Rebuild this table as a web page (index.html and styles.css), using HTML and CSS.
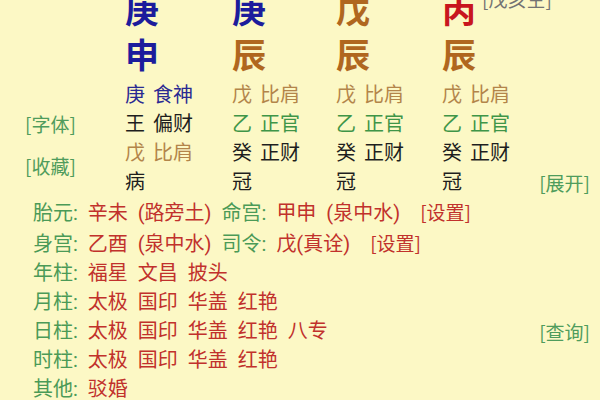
FILE: index.html
```html
<!DOCTYPE html>
<html lang="zh-CN">
<head>
<meta charset="utf-8">
<title>排盘</title>
<link rel="stylesheet" href="styles.css">
</head>
<body>
<div class="chart">
  <div></div>
  <div class="big navy">庚</div>
  <div class="big navy">庚</div>
  <div class="big brown">戊</div>
  <div class="big red">丙<span class="kong">[戊亥空]</span></div>

  <div></div>
  <div class="big navy">申</div>
  <div class="big brown">辰</div>
  <div class="big brown">辰</div>
  <div class="big brown">辰</div>

  <div class="side">
    <span class="link">[字体]</span>
    <span class="link">[收藏]</span>
  </div>
  <div class="cell snavy">庚 食神</div>
  <div class="cell tan">戊 比肩</div>
  <div class="cell tan">戊 比肩</div>
  <div class="cell tan">戊 比肩</div>

  <div class="cell black">王 偏财</div>
  <div class="cell green">乙 正官</div>
  <div class="cell green">乙 正官</div>
  <div class="cell green">乙 正官</div>

  <div class="cell tan">戊 比肩</div>
  <div class="cell black">癸 正财</div>
  <div class="cell black">癸 正财</div>
  <div class="cell black">癸 正财</div>

  <div class="cell black">病</div>
  <div class="cell black">冠</div>
  <div class="cell black">冠</div>
  <div class="cell black last"><span>冠</span><span class="link">[展开]</span></div>
</div>

<div class="info">
  <div class="row"><span class="k">胎元:</span> <span class="v">辛未 (路旁土)</span> <span class="k">命宫:</span> <span class="v">甲申 (泉中水)</span> <span class="v set">[设置]</span></div>
  <div class="row"><span class="k">身宫:</span> <span class="v">乙酉 (泉中水)</span> <span class="k">司令:</span> <span class="v">戊(真诠)</span> <span class="v set">[设置]</span></div>
  <div class="row"><span class="k">年柱:</span> <span class="v">福星 文昌 披头</span></div>
  <div class="row"><span class="k">月柱:</span> <span class="v">太极 国印 华盖 红艳</span></div>
  <div class="row split"><span><span class="k">日柱:</span> <span class="v">太极 国印 华盖 红艳 八专</span></span><span class="link">[查询]</span></div>
  <div class="row"><span class="k">时柱:</span> <span class="v">太极 国印 华盖 红艳</span></div>
  <div class="row"><span class="k">其他:</span> <span class="v">驳婚</span></div>
</div>
</body>
</html>
```
FILE: styles.css
```css
html, body {
  margin: 0;
  padding: 0;
  background: #fcf8c5;
}
body {
  width: 600px;
  height: 400px;
  overflow: hidden;
  font-family: Roboto, "Noto Sans CJK SC", sans-serif;
  color: #1e1e1e;
}
.chart {
  display: grid;
  grid-template-columns: 125px 107px 104px 106px 1fr;
  grid-template-rows: 45px 47px repeat(4, 29px);
  margin-top: -11px;
}
.big {
  font-size: 34px;
  font-weight: bold;
  line-height: 45px;
  white-space: nowrap;
}
.navy { color: #1c1c9c; }
.brown { color: #b0671f; }
.red { color: #c8161e; }
.kong {
  font-family: "Noto Sans CJK SC", sans-serif;
  font-size: 19px;
  font-weight: normal;
  line-height: 19px;
  color: #737373;
  margin-left: 6px;
  vertical-align: 16px;
}
.side {
  grid-row: span 4;
  display: flex;
  flex-direction: column;
  align-items: flex-start;
  padding-left: 25px;
  padding-top: 28px;
  gap: 13px;
}
.link {
  font-family: "Noto Sans CJK SC", sans-serif;
  font-size: 19px;
  line-height: 29px;
  color: #4f9c5c;
}
.cell {
  font-size: 20px;
  line-height: 29px;
  word-spacing: 3px;
  white-space: nowrap;
}
.snavy { color: #2a2a92; }
.tan { color: #b3854a; }
.green { color: #3f9548; }
.black { color: #1e1e1e; }
.last {
  display: flex;
  justify-content: space-between;
  padding-right: 10px;
}
.info {
  padding-left: 33px;
  padding-right: 10px;
  font-size: 20px;
  line-height: 29px;
  word-spacing: 5px;
}
.row { white-space: nowrap; }
.split {
  display: flex;
  justify-content: space-between;
}
.k { color: #4b9a57; }
.v { color: #c1312c; }
.set {
  font-family: "Noto Sans CJK SC", sans-serif;
  font-size: 19px;
  margin-left: 10px;
}
```
